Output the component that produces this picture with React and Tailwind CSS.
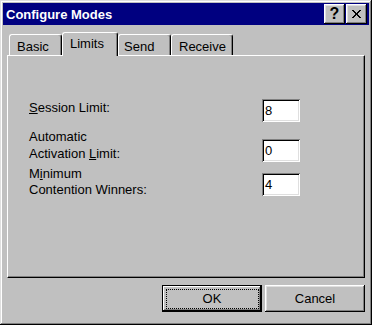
import React from 'react';

const raised = 'shadow-[inset_-1px_-1px_0_#000,inset_1px_1px_0_#fff,inset_-2px_-2px_0_#808080,inset_2px_2px_0_#dfdfdf]';
const sunken = 'shadow-[inset_1px_1px_0_#808080,inset_-1px_-1px_0_#fff,inset_2px_2px_0_#000,inset_-2px_-2px_0_#dfdfdf]';

const tabs = [
  { label: 'Basic', cls: 'w-[53px] pl-[7px]' },
  { label: 'Limits', cls: 'w-[56px] pl-[7px]', active: true },
  { label: 'Send', cls: 'w-[53px] pl-[5px]' },
  { label: 'Receive', cls: 'w-[62px] pl-[7px]' },
];

const CloseGlyph = () => (
  <svg width="9" height="8" viewBox="0 0 9 8" shapeRendering="crispEdges">
    {[0, 1, 2, 3, 4, 5, 6, 7].map((r) => (
      <g key={r}>
        <rect x={r * 7 / 7} y={r} width="2" height="1" fill="#000" />
        <rect x={7 - r} y={r} width="2" height="1" fill="#000" />
      </g>
    ))}
  </svg>
);

const Field = ({ value }) => (
  <div className={`w-[38px] h-[23px] bg-white flex items-center pl-[3px] ${sunken}`}>{value}</div>
);

const App = () => {
  return (
    <div className="w-[372px] h-[325px] bg-[#c0c0c0] p-[3px] flex flex-col font-['Liberation_Sans',Arial,sans-serif] text-[13px] text-black shadow-[inset_-1px_-1px_0_#000,inset_1px_1px_0_#dfdfdf,inset_-2px_-2px_0_#808080,inset_2px_2px_0_#fff]">
      {/* Title bar */}
      <div className="h-[22px] bg-[#000080] flex items-center justify-between pl-[3px] pr-[2px]">
        <span className="text-white font-bold leading-none">Configure Modes</span>
        <div className="flex gap-[1px]">
          <div className={`w-[21px] h-[20px] bg-[#c0c0c0] flex items-center justify-center font-bold text-[16px] leading-none ${raised}`}>?</div>
          <div className={`w-[21px] h-[20px] bg-[#c0c0c0] flex items-center justify-center ${raised}`}>
            <CloseGlyph />
          </div>
        </div>
      </div>

      <div className="px-[4px] flex flex-col">
        {/* Tabs */}
        <div className="mt-[7px] flex items-end pl-[2px] relative z-10">
          {tabs.map((t) => (
            <div
              key={t.label}
              className={`${t.cls} bg-[#c0c0c0] border-l border-t border-r border-l-white border-t-white border-r-black rounded-t-[3px] shadow-[inset_-1px_0_0_#808080] leading-[15px] ${t.active ? 'h-[24px] -mb-px pt-[3px]' : 'h-[21px] pt-[4px]'}`}
            >
              {t.label}
            </div>
          ))}
        </div>

        {/* Panel */}
        <div className="h-[223px] border-t border-l border-white border-r border-b border-r-black border-b-black shadow-[inset_-1px_-1px_0_#808080] pl-[21px] pt-[43px] flex flex-col">
          <div className="flex items-start">
            <div className="w-[233px] pt-[1px] leading-[16px]">
              <span className="underline">S</span>ession Limit:
            </div>
            <Field value="8" />
          </div>
          <div className="flex items-start mt-[6px]">
            <div className="w-[233px] leading-[17px]">
              Automatic<br />Activation <span className="underline">L</span>imit:
            </div>
            <div className="mt-[11px]"><Field value="0" /></div>
          </div>
          <div className="flex items-start mt-[4px]">
            <div className="w-[233px] leading-[16px]">
              M<span className="underline">i</span>nimum<br />Contention Winners:
            </div>
            <div className="mt-[7px]"><Field value="4" /></div>
          </div>
        </div>

        {/* Buttons */}
        <div className="mt-[7px] flex justify-end gap-[3px]">
          <div className="relative w-[100px] h-[27px] border border-black shadow-[inset_-1px_-1px_0_#000,inset_1px_1px_0_#fff,inset_-2px_-2px_0_#808080] flex items-center justify-center">
            OK
            <div className="absolute top-[3px] left-[3px] right-[2px] bottom-[2px] border border-dotted border-black" />
          </div>
          <div className={`w-[100px] h-[27px] flex items-center justify-center ${raised}`}>Cancel</div>
        </div>
      </div>
    </div>
  );
};

export default App;
